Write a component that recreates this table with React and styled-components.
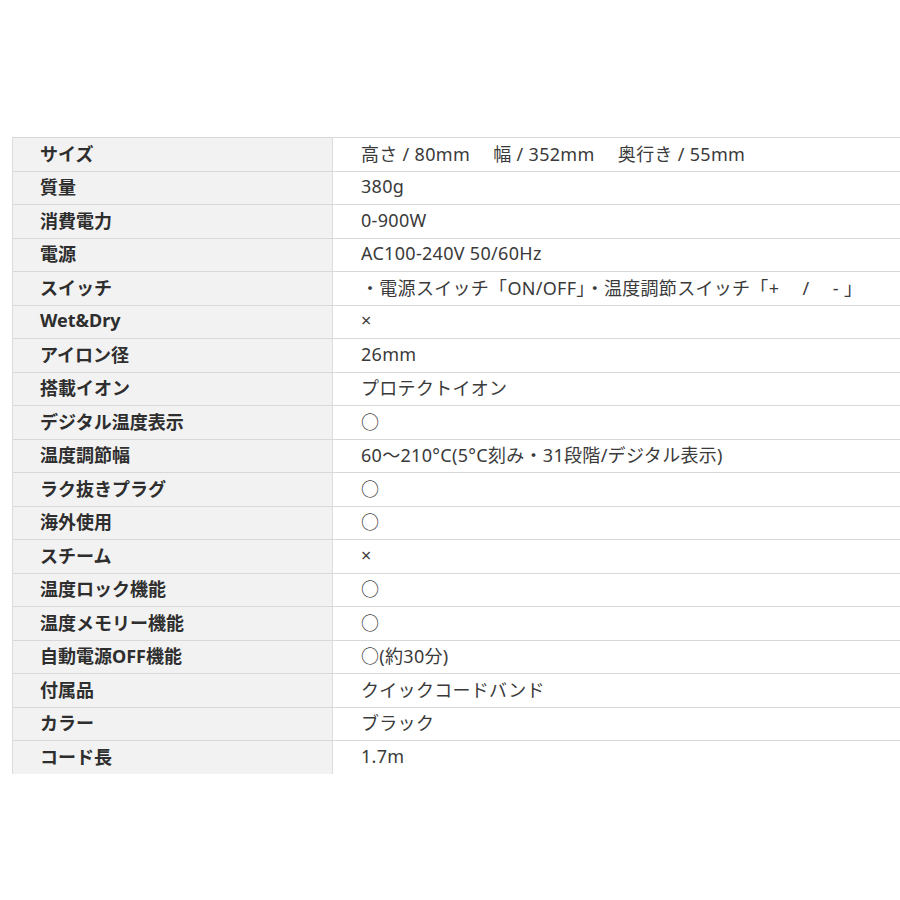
import styled, { createGlobalStyle } from 'styled-components';

const GlobalStyle = createGlobalStyle`
    html, body {
        margin: 0;
        padding: 0;
        background: #fff;
        overflow: hidden;
    }
`;

const Page = styled.div`
    width: 900px;
    height: 900px;
    padding: 137px 0 0 12px;
    box-sizing: border-box;
    font-family: "Noto Sans", "Noto Sans CJK JP", sans-serif;
    color: #333;
`;

const SpecTable = styled.div`
    width: 892px;
    display: grid;
    grid-template-columns: 320px 1fr;
    border-left: 1px solid #dcdcdc;
`;

const Label = styled.div`
    height: 33.5px;
    box-sizing: border-box;
    display: flex;
    align-items: center;
    padding: 0 0 3px 27px;
    background: #f2f2f2;
    border-top: 1px solid #d8d8d8;
    border-right: 1px solid #dcdcdc;
    font-size: 18px;
    font-weight: 700;
    color: #2e2e2e;
`;

const Value = styled.div`
    height: 33.5px;
    box-sizing: border-box;
    display: flex;
    align-items: center;
    padding: 0 0 3px 28px;
    background: #fff;
    border-top: 1px solid #d8d8d8;
    font-size: 18px;
    letter-spacing: 0.3px;
    color: #3a3a3a;
    white-space: pre;
`;

const specs = [
    ['サイズ', '高さ / 80mm　 幅 / 352mm　 奥行き / 55mm'],
    ['質量', '380g'],
    ['消費電力', '0-900W'],
    ['電源', 'AC100-240V 50/60Hz'],
    ['スイッチ', '・電源スイッチ「ON/OFF」・温度調節スイッチ「+ 　/ 　- 」'],
    ['Wet&Dry', '×'],
    ['アイロン径', '26mm'],
    ['搭載イオン', 'プロテクトイオン'],
    ['デジタル温度表示', '○'],
    ['温度調節幅', '60〜210°C(5°C刻み・31段階/デジタル表示)'],
    ['ラク抜きプラグ', '○'],
    ['海外使用', '○'],
    ['スチーム', '×'],
    ['温度ロック機能', '○'],
    ['温度メモリー機能', '○'],
    ['自動電源OFF機能', '○(約30分)'],
    ['付属品', 'クイックコードバンド'],
    ['カラー', 'ブラック'],
    ['コード長', '1.7m'],
];

export default function App() {
    return (
        <Page>
            <GlobalStyle />
            <SpecTable>
                {specs.flatMap(([label, value]) => [
                    <Label key={label + '-l'}>{label}</Label>,
                    <Value key={label + '-v'}>{value}</Value>,
                ])}
            </SpecTable>
        </Page>
    );
}
